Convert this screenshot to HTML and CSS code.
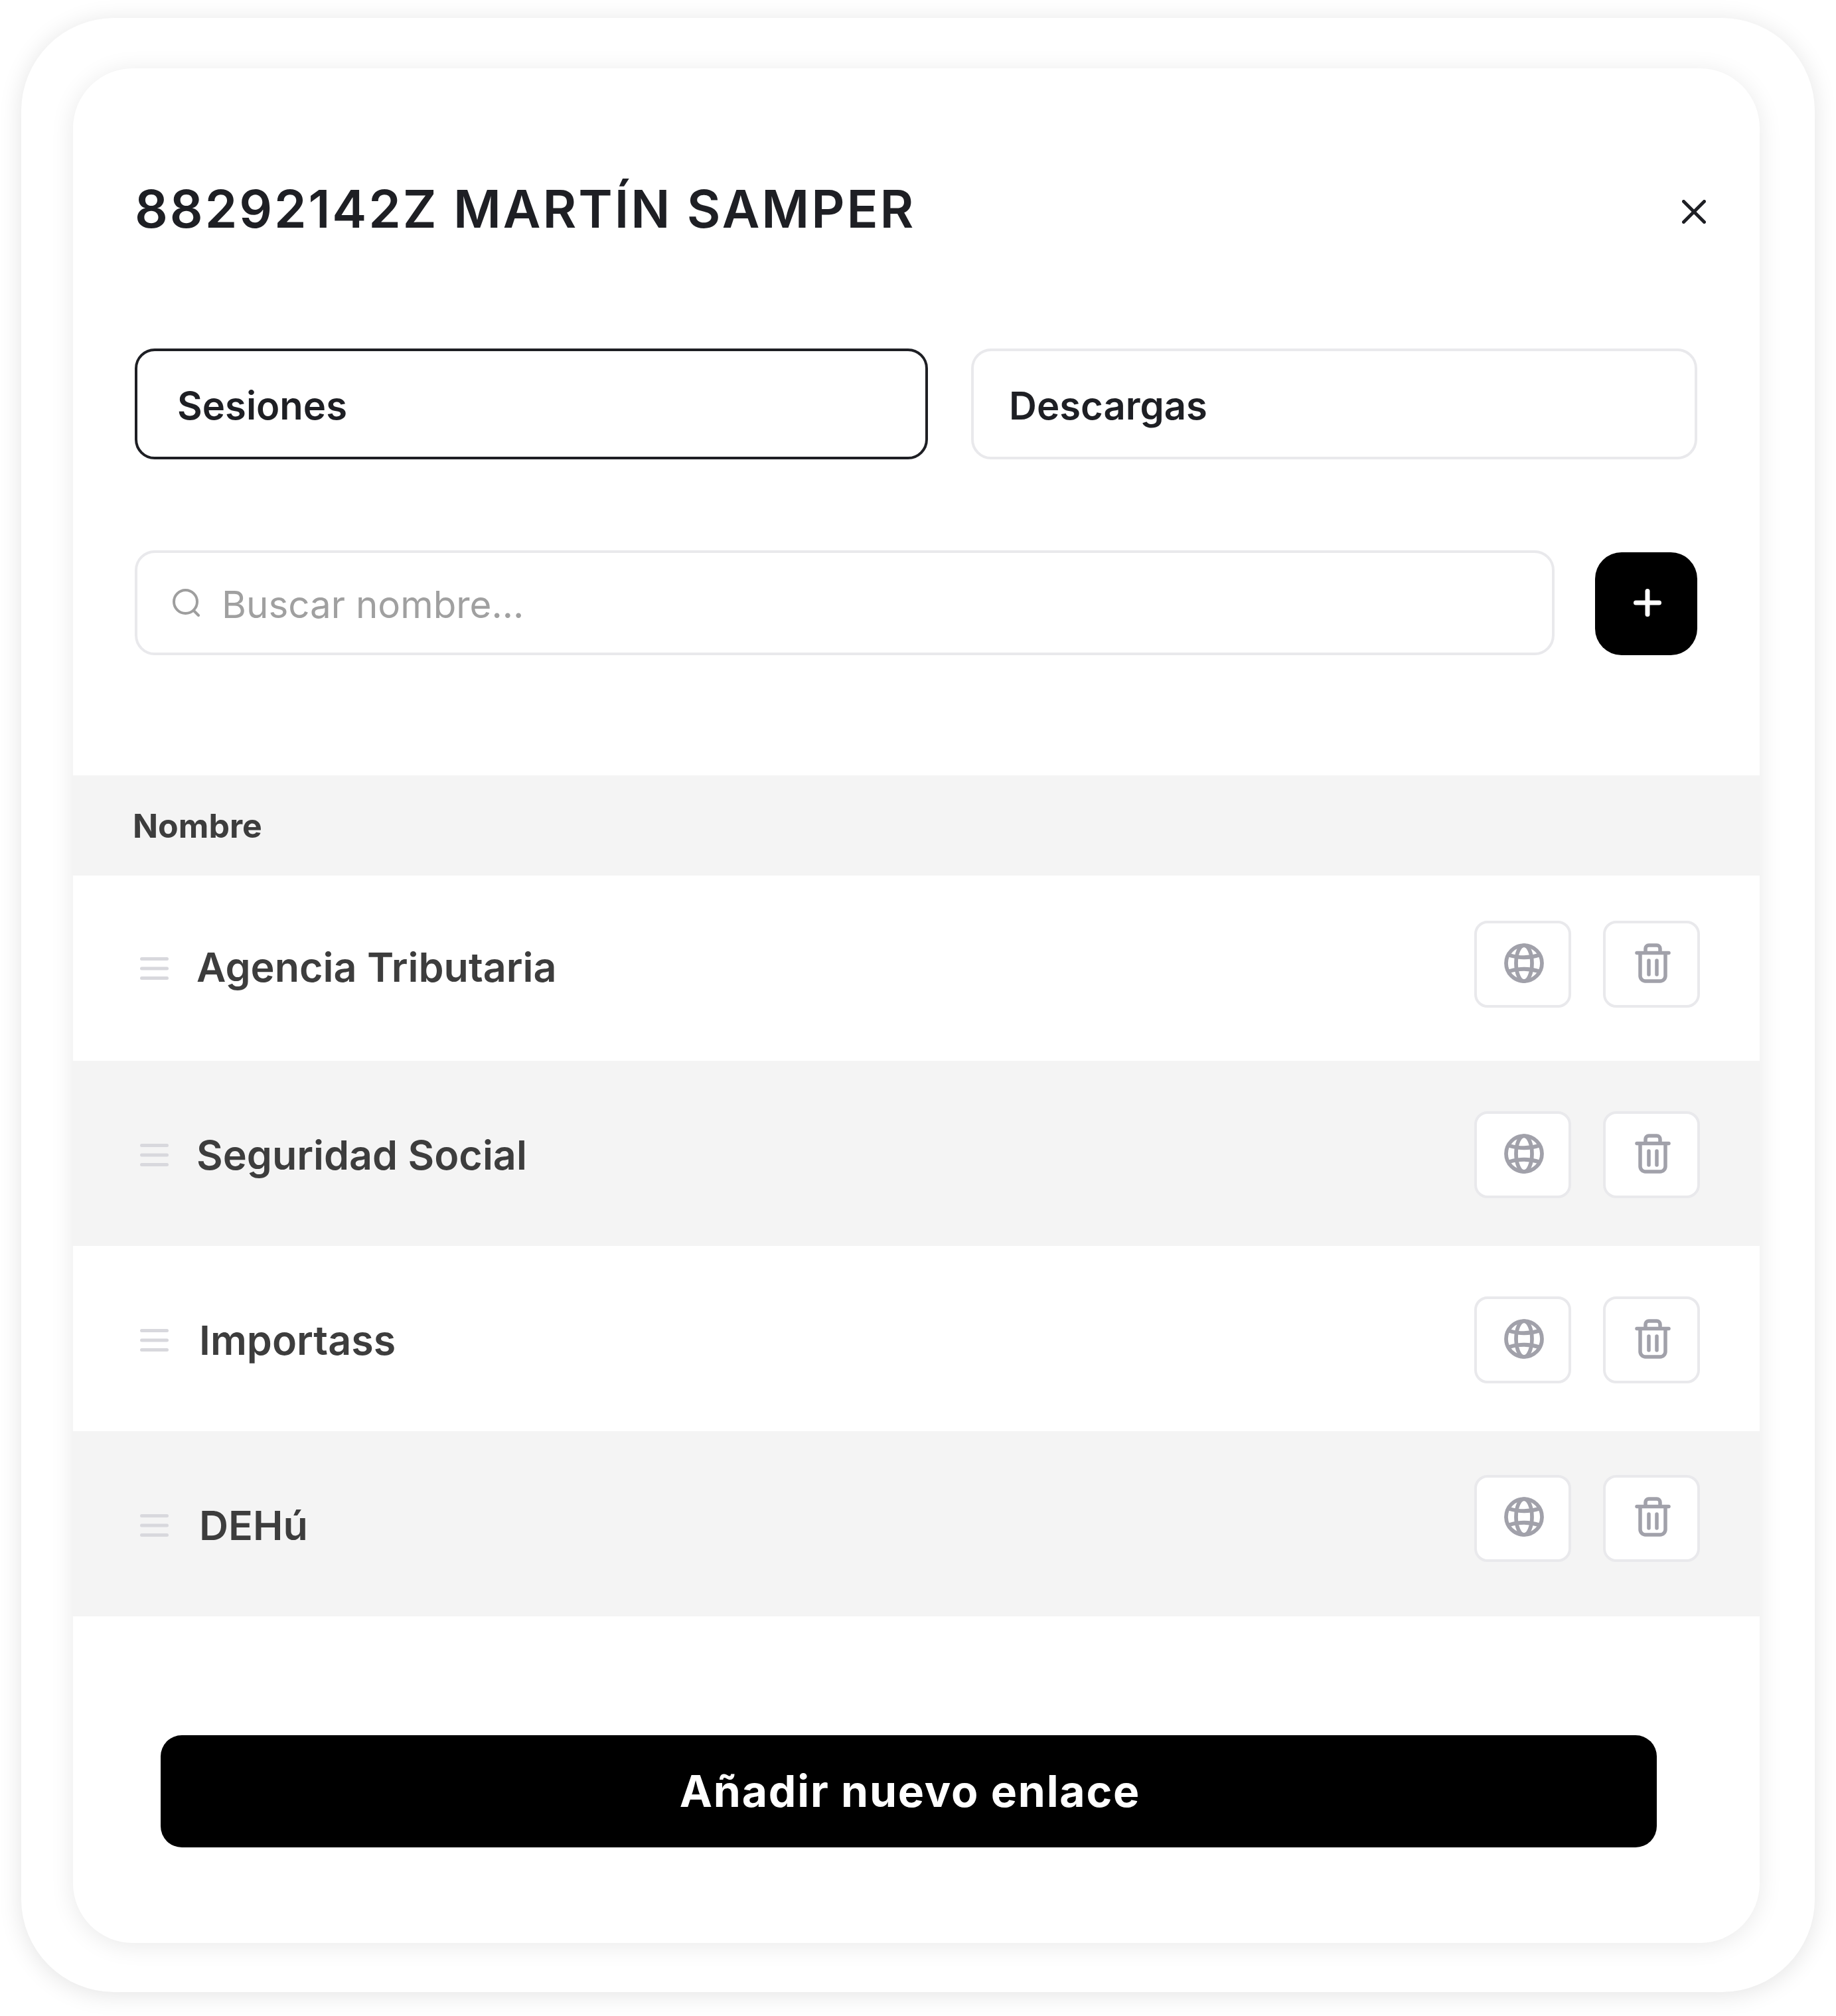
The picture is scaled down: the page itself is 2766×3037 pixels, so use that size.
FILE: index.html
```html
<!DOCTYPE html>
<html lang="es">
<head>
  <meta charset="UTF-8">
  <meta name="viewport" content="width=device-width, initial-scale=1.0">
  <title>Enlaces</title>
  <link rel="stylesheet" href="styles.css">
</head>
<body>
<div class="frame">
  <div class="modal">
    <div class="modal-header">
      <h1 class="modal-title">88292142Z MARTÍN SAMPER</h1>
      <button class="close-button" title="Cerrar">
        <svg width="36" height="36" viewBox="0 0 36 36" fill="none" stroke="currentColor" stroke-width="5" stroke-linecap="round">
          <path d="M2.5 2.5l31 31"></path>
          <path d="M33.500 2.500l-31 31"></path>
        </svg>
      </button>
    </div>

    <div class="tabs">
      <button class="tab tab-active">Sesiones</button>
      <button class="tab tab-other">Descargas</button>
    </div>

    <div class="search-row">
      <label class="search-box">
        <svg class="search-icon" width="42" height="42" viewBox="0 0 42 42" fill="none" stroke="currentColor" stroke-width="4" stroke-linecap="round">
          <circle cx="19.500" cy="19.500" r="17.500"></circle>
          <path d="M32 33l7 7"></path>
        </svg>
        <input class="search-input" type="text" placeholder="Buscar nombre...">
      </label>
      <button class="add-button" title="Añadir">
        <svg width="42" height="42" viewBox="0 0 42 42" fill="none" stroke="currentColor" stroke-width="7" stroke-linecap="round">
          <path d="M21 3.500v35"></path>
          <path d="M3.500 21h35"></path>
        </svg>
      </button>
    </div>

    <div class="table-head">Nombre</div>

    <div class="row row-first">
      <svg class="drag-icon" width="43" height="34" viewBox="0 0 43 34" fill="none" stroke="currentColor" stroke-width="5" stroke-linecap="round">
        <path d="M2.500 2.500h38"></path><path d="M2.500 17h38"></path><path d="M2.500 31.500h38"></path>
      </svg>
      <span class="row-name">Agencia Tributaria</span>
      <div class="row-actions">
        <button class="icon-button">
          <svg width="60" height="60" viewBox="0 0 24 24" fill="none" stroke="currentColor" stroke-width="2.300">
            <circle cx="12" cy="12" r="10.800"></circle>
            <ellipse cx="12" cy="12" rx="4.800" ry="10.800"></ellipse>
            <path d="M2.500 7q9.500 3 19 0"></path>
            <path d="M2.500 17q9.500-3 19 0"></path>
          </svg>
        </button>
        <button class="icon-button">
          <svg width="54" height="60" viewBox="0 0 54 60" fill="none" stroke="currentColor" stroke-width="5.500" stroke-linecap="round" stroke-linejoin="round">
            <path d="M3 14.500h48"></path>
            <path d="M16 14V8a5 5 0 0 1 5-5h12a5 5 0 0 1 5 5v6"></path>
            <path d="M8 15v34a8 8 0 0 0 8 8h22a8 8 0 0 0 8-8V15"></path>
            <path d="M21 26v21"></path>
            <path d="M33 26v21"></path>
          </svg>
        </button>
      </div>
    </div>

    <div class="row row-alt">
      <svg class="drag-icon" width="43" height="34" viewBox="0 0 43 34" fill="none" stroke="currentColor" stroke-width="5" stroke-linecap="round">
        <path d="M2.500 2.500h38"></path><path d="M2.500 17h38"></path><path d="M2.500 31.500h38"></path>
      </svg>
      <span class="row-name">Seguridad Social</span>
      <div class="row-actions">
        <button class="icon-button">
          <svg width="60" height="60" viewBox="0 0 24 24" fill="none" stroke="currentColor" stroke-width="2.300">
            <circle cx="12" cy="12" r="10.800"></circle>
            <ellipse cx="12" cy="12" rx="4.800" ry="10.800"></ellipse>
            <path d="M2.500 7q9.500 3 19 0"></path>
            <path d="M2.500 17q9.500-3 19 0"></path>
          </svg>
        </button>
        <button class="icon-button">
          <svg width="54" height="60" viewBox="0 0 54 60" fill="none" stroke="currentColor" stroke-width="5.500" stroke-linecap="round" stroke-linejoin="round">
            <path d="M3 14.500h48"></path>
            <path d="M16 14V8a5 5 0 0 1 5-5h12a5 5 0 0 1 5 5v6"></path>
            <path d="M8 15v34a8 8 0 0 0 8 8h22a8 8 0 0 0 8-8V15"></path>
            <path d="M21 26v21"></path>
            <path d="M33 26v21"></path>
          </svg>
        </button>
      </div>
    </div>

    <div class="row">
      <svg class="drag-icon" width="43" height="34" viewBox="0 0 43 34" fill="none" stroke="currentColor" stroke-width="5" stroke-linecap="round">
        <path d="M2.500 2.500h38"></path><path d="M2.500 17h38"></path><path d="M2.500 31.500h38"></path>
      </svg>
      <span class="row-name row-name-shifted">Importass</span>
      <div class="row-actions">
        <button class="icon-button">
          <svg width="60" height="60" viewBox="0 0 24 24" fill="none" stroke="currentColor" stroke-width="2.300">
            <circle cx="12" cy="12" r="10.800"></circle>
            <ellipse cx="12" cy="12" rx="4.800" ry="10.800"></ellipse>
            <path d="M2.500 7q9.500 3 19 0"></path>
            <path d="M2.500 17q9.500-3 19 0"></path>
          </svg>
        </button>
        <button class="icon-button">
          <svg width="54" height="60" viewBox="0 0 54 60" fill="none" stroke="currentColor" stroke-width="5.500" stroke-linecap="round" stroke-linejoin="round">
            <path d="M3 14.500h48"></path>
            <path d="M16 14V8a5 5 0 0 1 5-5h12a5 5 0 0 1 5 5v6"></path>
            <path d="M8 15v34a8 8 0 0 0 8 8h22a8 8 0 0 0 8-8V15"></path>
            <path d="M21 26v21"></path>
            <path d="M33 26v21"></path>
          </svg>
        </button>
      </div>
    </div>

    <div class="row row-alt">
      <svg class="drag-icon" width="43" height="34" viewBox="0 0 43 34" fill="none" stroke="currentColor" stroke-width="5" stroke-linecap="round">
        <path d="M2.500 2.500h38"></path><path d="M2.500 17h38"></path><path d="M2.500 31.500h38"></path>
      </svg>
      <span class="row-name row-name-shifted">DEHú</span>
      <div class="row-actions row-actions-raised">
        <button class="icon-button">
          <svg width="60" height="60" viewBox="0 0 24 24" fill="none" stroke="currentColor" stroke-width="2.300">
            <circle cx="12" cy="12" r="10.800"></circle>
            <ellipse cx="12" cy="12" rx="4.800" ry="10.800"></ellipse>
            <path d="M2.500 7q9.500 3 19 0"></path>
            <path d="M2.500 17q9.500-3 19 0"></path>
          </svg>
        </button>
        <button class="icon-button">
          <svg width="54" height="60" viewBox="0 0 54 60" fill="none" stroke="currentColor" stroke-width="5.500" stroke-linecap="round" stroke-linejoin="round">
            <path d="M3 14.500h48"></path>
            <path d="M16 14V8a5 5 0 0 1 5-5h12a5 5 0 0 1 5 5v6"></path>
            <path d="M8 15v34a8 8 0 0 0 8 8h22a8 8 0 0 0 8-8V15"></path>
            <path d="M21 26v21"></path>
            <path d="M33 26v21"></path>
          </svg>
        </button>
      </div>
    </div>

    <button class="submit-button">Añadir nuevo enlace</button>
  </div>
</div>
</body>
</html>
```

FILE: styles.css
```css
:root {
  --dark: #1e1f24;
  --text: #3d3d3d;
  --border: #e9e9ec;
  --stripe: #f4f4f4;
  --icon: #a1a1aa;
  --muted: #9e9e9e;
}

* {
  margin: 0;
  padding: 0;
  box-sizing: border-box;
}

body {
  min-height: 3037px;
  padding: 27px 0 0 32px;
  background-color: #ffffff;
  font-family: Inter, "Noto Sans", sans-serif;
  color: var(--text);
}

button {
  font-family: inherit;
  cursor: pointer;
  border: none;
  background: none;
}

.frame {
  width: 2702px;
  height: 2974px;
  padding: 76px 83px 74px 78px;
  background-color: #ffffff;
  border-radius: 140px;
  box-shadow: 0 4px 36px rgba(0, 0, 0, 0.11);
}

.modal {
  display: flex;
  flex-direction: column;
  height: 100%;
  background-color: #ffffff;
  border-radius: 90px;
  box-shadow: 0 4px 36px rgba(0, 0, 0, 0.09);
}

.modal-header {
  display: flex;
  justify-content: space-between;
  align-items: center;
  height: 422px;
  padding: 0 81px 0 93px;
}

.modal-title {
  font-size: 78px;
  font-weight: 600;
  letter-spacing: 2.900px;
  color: var(--dark);
}

.close-button {
  display: flex;
  color: var(--dark);
  margin-top: 10px;
}

.tabs {
  display: flex;
  gap: 65px;
  padding: 0 94px 0 93px;
}

.tab {
  height: 167px;
  padding-top: 5px;
  border-radius: 30px;
  font-size: 58px;
  font-weight: 600;
  text-align: left;
  color: var(--dark);
  background-color: #ffffff;
}

.tab-active {
  width: 1195px;
  padding-left: 60px;
  border: 4px solid var(--dark);
}

.tab-other {
  flex: 1;
  padding-left: 53px;
  border: 4px solid var(--border);
}

.search-row {
  display: flex;
  align-items: flex-end;
  gap: 61px;
  margin-top: 137px;
  padding: 0 94px 0 93px;
}

.search-box {
  flex: 1;
  display: flex;
  align-items: center;
  gap: 32px;
  height: 158px;
  padding-left: 53px;
  border: 4px solid var(--border);
  border-radius: 30px;
}

.search-icon {
  color: var(--muted);
  flex-shrink: 0;
}

.search-input {
  flex: 1;
  padding-top: 4px;
  border: none;
  outline: none;
  background: none;
  font-family: inherit;
  font-size: 56.500px;
  color: var(--text);
}

.search-input::placeholder {
  color: #a0a0a0;
  opacity: 1;
}

.add-button {
  display: flex;
  align-items: center;
  justify-content: center;
  width: 154px;
  height: 155px;
  padding: 0 0 4px 4px;
  border-radius: 40px;
  background-color: #000000;
  color: #ffffff;
}

.table-head {
  display: flex;
  align-items: center;
  height: 151px;
  margin-top: 181px;
  padding-left: 90px;
  background-color: var(--stripe);
  font-size: 50px;
  font-weight: 700;
  color: var(--text);
}

.row {
  display: flex;
  align-items: center;
  height: 279px;
  padding: 4px 90px 0 101px;
}

.row-first {
  padding-top: 0;
}

.row-first .row-name {
  padding-bottom: 4px;
}

.row-alt {
  background-color: var(--stripe);
}

.drag-icon {
  color: #d8d8dd;
  flex-shrink: 0;
}

.row-name {
  margin-left: 42px;
  font-size: 61px;
  font-weight: 600;
  color: var(--text);
}

.row-name-shifted {
  margin-left: 46px;
}

.row-actions {
  display: flex;
  gap: 48px;
  margin-left: auto;
}

.row-first .row-actions {
  padding-bottom: 12px;
}

.row-actions-raised {
  padding-bottom: 21px;
}

.icon-button {
  display: flex;
  align-items: center;
  justify-content: center;
  width: 146px;
  height: 131px;
  padding: 0 0 4px 4px;
  border: 4px solid var(--border);
  border-radius: 20px;
  background-color: #ffffff;
  color: var(--icon);
}

.submit-button {
  align-self: flex-start;
  width: 2254px;
  height: 169px;
  margin: 179px 0 0 132px;
  padding: 0 0 2px 4px;
  border-radius: 32px;
  background-color: #000000;
  color: #ffffff;
  font-size: 66px;
  font-weight: 700;
  letter-spacing: 1.800px;
}
```
